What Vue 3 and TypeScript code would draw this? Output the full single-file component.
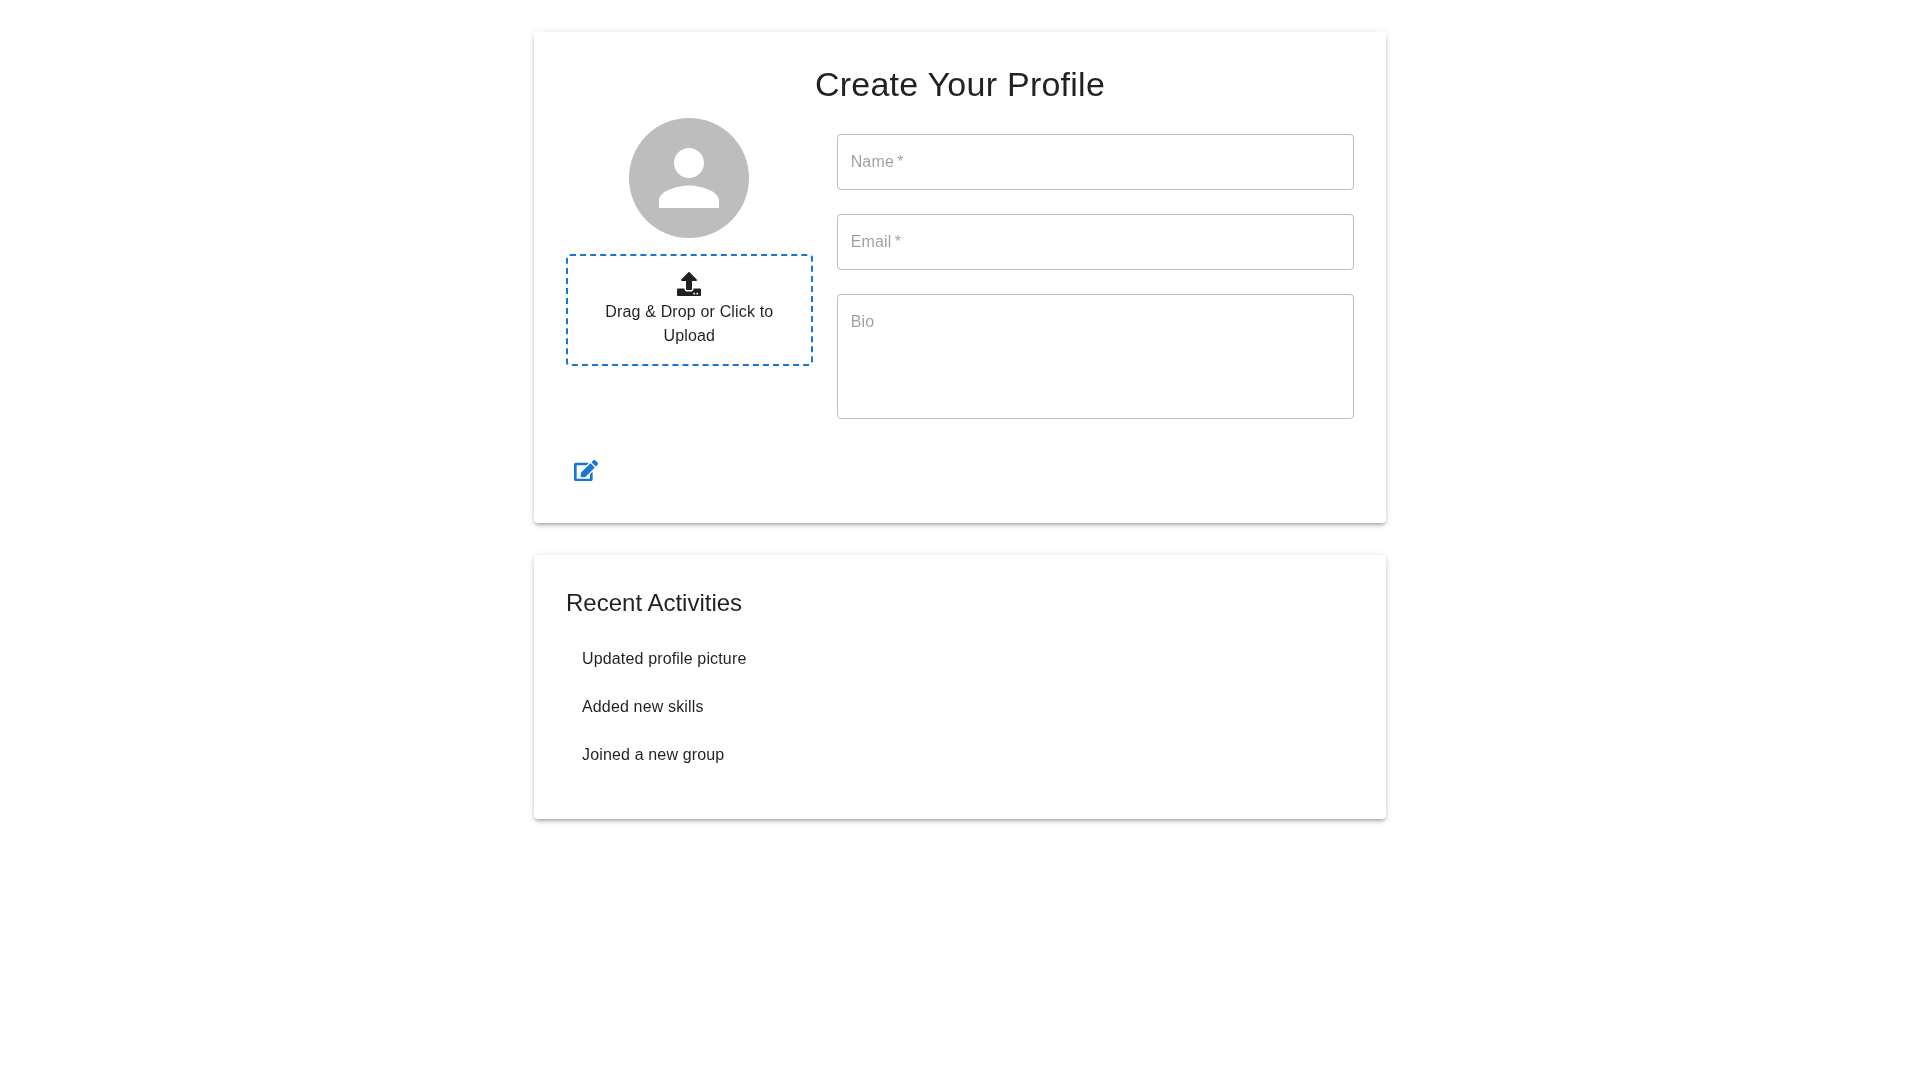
<template>
  <div class="page">
    <div class="card profile">
      <h1 class="title">Create Your Profile</h1>
      <div class="grid">
        <div class="left">
          <div class="avatar">
            <svg viewBox="0 0 24 24" class="person"><path d="M12 12c2.21 0 4-1.79 4-4s-1.79-4-4-4-4 1.79-4 4 1.79 4 4 4zm0 2c-2.67 0-8 1.34-8 4v2h16v-2c0-2.66-5.33-4-8-4z" /></svg>
          </div>
          <div class="dropzone">
            <svg viewBox="0 0 512 512" class="upload"><path d="M296 384h-80c-13.3 0-24-10.700-24-24V192h-87.700c-17.800 0-26.700-21.500-14.100-34.100L242.300 5.700c7.500-7.500 19.800-7.500 27.300 0l152.200 152.200c12.600 12.600 3.700 34.100-14.100 34.100H320v168c0 13.300-10.700 24-24 24zm216-8v112c0 13.300-10.700 24-24 24H24c-13.300 0-24-10.700-24-24V376c0-13.300 10.700-24 24-24h136v8c0 30.900 25.100 56 56 56h80c30.900 0 56-25.100 56-56v-8h136c13.300 0 24 10.700 24 24zm-124 88c0-11-9-20-20-20s-20 9-20 20 9 20 20 20 20-9 20-20zm64 0c0-11-9-20-20-20s-20 9-20 20 9 20 20 20 20-9 20-20z" /></svg>
            <p class="drop-text">Drag &amp; Drop or Click to Upload</p>
          </div>
        </div>
        <div class="right">
          <div v-for="field in fields" :key="field.label" class="field" :class="{ multi: field.multi }">
            <span class="placeholder">{{ field.label }}<span v-if="field.required">&thinsp;*</span></span>
          </div>
        </div>
      </div>
      <button class="edit-btn" type="button" aria-label="Edit">
        <svg viewBox="0 0 576 512" class="edit"><path d="M402.600 83.200l90.200 90.200c3.800 3.800 3.800 10 0 13.800L274.400 405.600l-92.800 10.300c-12.400 1.400-22.900-9.100-21.500-21.500l10.300-92.800L388.800 83.200c3.800-3.800 10-3.800 13.800 0zm162-22.900l-48.800-48.800c-15.200-15.200-39.900-15.200-55.200 0l-35.400 35.400c-3.800 3.800-3.800 10 0 13.800l90.200 90.200c3.800 3.800 10 3.800 13.800 0l35.400-35.400c15.200-15.300 15.200-40 0-55.200zM384 346.200V448H64V128h229.800c3.200 0 6.200-1.300 8.500-3.500l40-40c7.600-7.600 2.200-20.500-8.500-20.500H48C21.500 64 0 85.500 0 112v352c0 26.500 21.500 48 48 48h352c26.500 0 48-21.500 48-48V306.200c0-10.700-12.900-16-20.500-8.500l-40 40c-2.200 2.300-3.500 5.300-3.500 8.500z" /></svg>
      </button>
    </div>
    <div class="card activities">
      <h2 class="subtitle">Recent Activities</h2>
      <ul class="list">
        <li v-for="item in activities" :key="item">{{ item }}</li>
      </ul>
    </div>
  </div>
</template>

<script setup lang="ts">
const fields = [
  { label: 'Name', required: true, multi: false },
  { label: 'Email', required: true, multi: false },
  { label: 'Bio', required: false, multi: true },
];

const activities = ['Updated profile picture', 'Added new skills', 'Joined a new group'];
</script>

<style>
body {
  margin: 0;
  background: #fff;
}
</style>

<style scoped>
.page {
  box-sizing: border-box;
  width: 900px;
  margin: 0 auto;
  padding: 32px 24px;
  font-family: "Liberation Sans", Arial, sans-serif;
  color: rgba(0, 0, 0, 0.87);
  will-change: transform;
}

.card {
  background: #fff;
  border-radius: 4px;
  box-shadow: 0 3px 3px -2px rgba(0, 0, 0, 0.2), 0 3px 4px rgba(0, 0, 0, 0.14), 0 1px 8px rgba(0, 0, 0, 0.12);
  padding: 32px;
}

.profile {
  height: 491px;
  box-sizing: border-box;
  margin-bottom: 32px;
}

.title {
  margin: -1px 0 0;
  font-size: 34px;
  font-weight: 400;
  line-height: 42px;
  letter-spacing: 0.25px;
  text-align: center;
}

.grid {
  display: flex;
  gap: 24px;
  margin-top: 13px;
}

.left {
  width: 246.67px;
  display: flex;
  flex-direction: column;
  align-items: center;
  gap: 16px;
}

.avatar {
  width: 120px;
  height: 120px;
  border-radius: 50%;
  background: #bdbdbd;
  display: flex;
  align-items: center;
  justify-content: center;
}

.person {
  width: 90px;
  height: 90px;
  fill: #fff;
}

.dropzone {
  box-sizing: border-box;
  width: 100%;
  height: 112px;
  border: 2px dashed #1976d2;
  border-radius: 4px;
  padding: 16px;
  display: flex;
  flex-direction: column;
  align-items: center;
  text-align: center;
}

.upload {
  width: 24px;
  height: 24px;
  fill: rgba(0, 0, 0, 0.87);
  flex: none;
}

.drop-text {
  margin: 4px 0 0;
  font-size: 16px;
  line-height: 24px;
  letter-spacing: 0.15px;
}

.right {
  flex: 1;
  display: flex;
  flex-direction: column;
  gap: 24px;
  padding-top: 16px;
}

.field {
  box-sizing: border-box;
  height: 56px;
  border: 1px solid rgba(0, 0, 0, 0.26);
  border-radius: 4px;
  padding: 0 13px 1px;
  display: flex;
  align-items: center;
}

.multi {
  height: 125px;
  align-items: flex-start;
  padding-top: 15px;
}

.placeholder {
  font-size: 16px;
  line-height: 23px;
  letter-spacing: 0.15px;
  color: rgba(0, 0, 0, 0.38);
}

.edit-btn {
  display: block;
  margin: 41px 0 0 7.500px;
  padding: 0;
  border: 0;
  background: none;
}

.edit {
  display: block;
  width: 24px;
  height: 21.330px;
  fill: #1976d2;
}

.activities {
  height: 264px;
  box-sizing: border-box;
}

.subtitle {
  margin: 0;
  font-size: 24px;
  font-weight: 400;
  line-height: 32px;
}

.list {
  list-style: none;
  margin: 14px 0 0;
  padding: 8px 16px 0;
}

.list li {
  font-size: 16px;
  line-height: 24px;
  letter-spacing: 0.15px;
  padding: 6px 0;
  margin-bottom: 12px;
}
</style>
